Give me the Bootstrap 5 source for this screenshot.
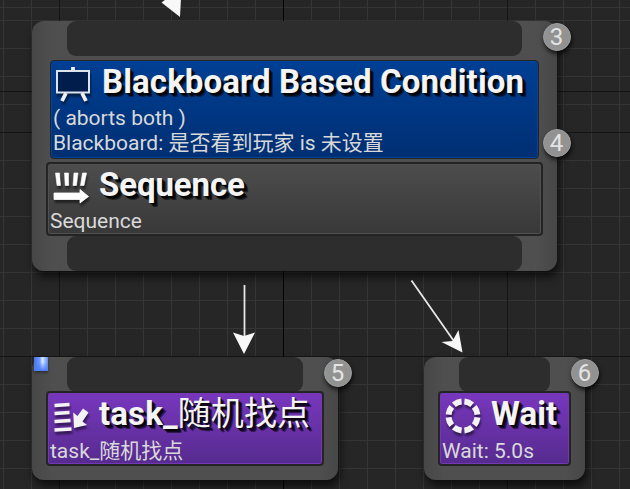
<!DOCTYPE html>
<html lang="zh">
<head>
<meta charset="utf-8">
<title>Behavior Tree</title>
<link href="https://cdn.jsdelivr.net/npm/bootstrap@5.3.0/dist/css/bootstrap.min.css" rel="stylesheet">
<style>
body{background:#262626;font-family:Roboto,"Noto Sans CJK SC",sans-serif}
.graph{width:630px;height:489px;
background:
linear-gradient(#030303,#030303) 283px 0/1px 100% no-repeat,
repeating-linear-gradient(90deg,#151515 0 1px,transparent 1px 224px) 59px 0,
repeating-linear-gradient(#151515 0 1px,transparent 1px 224px) 0 132px,
repeating-linear-gradient(90deg,#353535 0 1px,transparent 1px 28px) 3px 0,
repeating-linear-gradient(#353535 0 1px,transparent 1px 28px) 0 20px,#262626}
.bt-node{background:linear-gradient(90deg,rgba(72,72,72,.97),rgba(80,80,80,.97) 20px,rgba(80,80,80,.97) calc(100% - 20px),rgba(72,72,72,.97));border-radius:12px;box-shadow:2px 6px 9px rgba(0,0,0,.65);padding:0 14px}
.n-main{left:32px;top:21px;width:525px;height:250px}
.n-task{left:32px;top:357px;width:306px;height:123px}
.n-wait{left:424px;top:357px;width:161px;height:123px}
.pin{height:35px;margin:0 21px;background:#2d2d2d;border-radius:9px}
.block{border:1px solid #242424;border-radius:4px;color:#d9d9d9;font-size:21px;line-height:25px;white-space:nowrap;padding-left:2px}
.b-blue{margin:4px 4px 3px;height:99px;background:linear-gradient(#003f94,#002f72);box-shadow:inset 0 0 0 1px #00449a}
.b-gray{height:74px;border-width:2px;background:linear-gradient(#4d4d4d,#383838);box-shadow:inset 0 0 0 1px #505050}
.b-purple{height:75px;margin-top:-1px;border-width:2px;background:linear-gradient(#7837bd,#562b8f);box-shadow:inset 0 0 0 1px #7437b6}
.head{height:45px}
.b-purple .head{height:46px}
.ttl{font-size:33px;font-weight:700;line-height:42px;letter-spacing:.12px;padding-left:9px;color:#f4f4f4;text-shadow:1px 1px 0 rgba(0,0,0,.6),2px 2px 0 rgba(0,0,0,.6),3px 3px 0 rgba(0,0,0,.6),4px 4px 0 rgba(0,0,0,.5)}
.b-gray .ttl{letter-spacing:-.1px}
.cjk{font-weight:400;font-size:33px;line-height:1}
.ico{width:40px;height:40px;flex:none;overflow:visible;filter:drop-shadow(1px 3px 1px rgba(0,0,0,.5))}
.num{width:28px;height:28px;background:#929292;border:1px solid #9d9d9d;color:#e4e4e4;font-size:24px;line-height:26px;box-shadow:1px 3px 4px rgba(0,0,0,.7);text-align:center}
.p3{left:542.5px;top:23px}.p4{left:542.5px;top:129px}.p5{left:323.5px;top:359px}.p6{left:570.5px;top:359px}
.marker{left:34px;top:357px;width:14px;height:14px;background:linear-gradient(90deg,#4674e8,#6d9bff 40%,#d8e9ff 60%,#5d8df5);box-shadow:0 2px 2px #333}
.marker::after{content:"";position:absolute;inset:5px 0 0;background:linear-gradient(transparent,#4c7cf5)}
.wires{left:0;top:0;pointer-events:none}
</style>
<script src="https://cdn.jsdelivr.net/npm/bootstrap@5.3.0/dist/js/bootstrap.bundle.min.js"></script>
</head>
<body class="overflow-hidden">
<main class="graph position-relative overflow-hidden">
<section class="bt-node n-main position-absolute">
<div class="pin"></div>
<div class="block b-blue">
<div class="head d-flex align-items-start">
<svg class="ico" viewBox="0 0 40 40"><path d="M20 6v4M13 32l-4 8M29 32l4 8" stroke="#f0f0f0" stroke-width="3.800"/><rect x="4" y="10" width="32" height="21.500" fill="#001d4b" stroke="#dce3ec" stroke-width="2"/></svg>
<h1 class="ttl m-0">Blackboard Based Condition</h1></div>
<div class="sub">( aborts both )</div>
<div class="sub">Blackboard: 是否看到玩家 is 未设置</div>
</div>
<div class="block b-gray">
<div class="head d-flex align-items-start">
<svg class="ico" viewBox="0 0 40 40"><g fill="#fff"><path d="M5.500 9h4l1 12.500H7zM14.500 9h4l.2 12.500h-3.500zM24 9h4l-1.500 12.500H23zM32.500 9h4L34 21.500h-3.500z" stroke="#fff" stroke-width=".6"/><path d="M4 29h26v-3.500l8.500 7-8.500 6.500v-3.500H4z" stroke="#fff" stroke-width=".8" stroke-linejoin="round"/></g></svg>
<h2 class="ttl m-0">Sequence</h2></div>
<div class="sub">Sequence</div>
</div>
<div class="pin"></div>
</section>
<section class="bt-node n-task position-absolute">
<div class="pin"></div>
<div class="block b-purple">
<div class="head d-flex align-items-start">
<svg class="ico" viewBox="0 0 40 40"><g stroke="#f3f3f3" stroke-width="3.600"><path d="M4.500 12.500l15-1M4.500 20.500l15-1M4.500 28.500l16-1M4.500 37l17-1"/></g><path d="M33 15.500l5.500 4-6 9 4.500 3.500-13 3-.8-15.500 4.300 3.500z" fill="#f3f3f3"/></svg>
<h2 class="ttl m-0">task_<span class="cjk">随机找点</span></h2></div>
<div class="sub">task_随机找点</div>
</div>
</section>
<section class="bt-node n-wait position-absolute">
<div class="pin"></div>
<div class="block b-purple">
<div class="head d-flex align-items-start">
<svg class="ico" viewBox="0 0 40 40"><circle cx="21" cy="23" r="14.500" fill="none" stroke="#f3f3f3" stroke-width="6" pathLength="80" stroke-dasharray="7.400 2.600" stroke-dashoffset="-1.300"/></svg>
<h2 class="ttl m-0">Wait</h2></div>
<div class="sub">Wait: 5.0s</div>
</div>
</section>
<div class="marker position-absolute"></div>
<svg class="wires position-absolute" width="630" height="489"><g stroke="#e6e6e6" stroke-width="1.800"><path d="M244.500 285v52M411.500 280.500l42 60"/></g><g fill="#f8f8f8"><path d="M233 332.500l11 3.500 11-3.500-11 21.500zM441.500 342l11-1 6-11 4 22.500zM161.500 2.500L173-6l8 4-1 19z"/></g></svg>
<div class="num p3 position-absolute rounded-circle">3</div>
<div class="num p4 position-absolute rounded-circle">4</div>
<div class="num p5 position-absolute rounded-circle">5</div>
<div class="num p6 position-absolute rounded-circle">6</div>
</main>
</body>
</html>
